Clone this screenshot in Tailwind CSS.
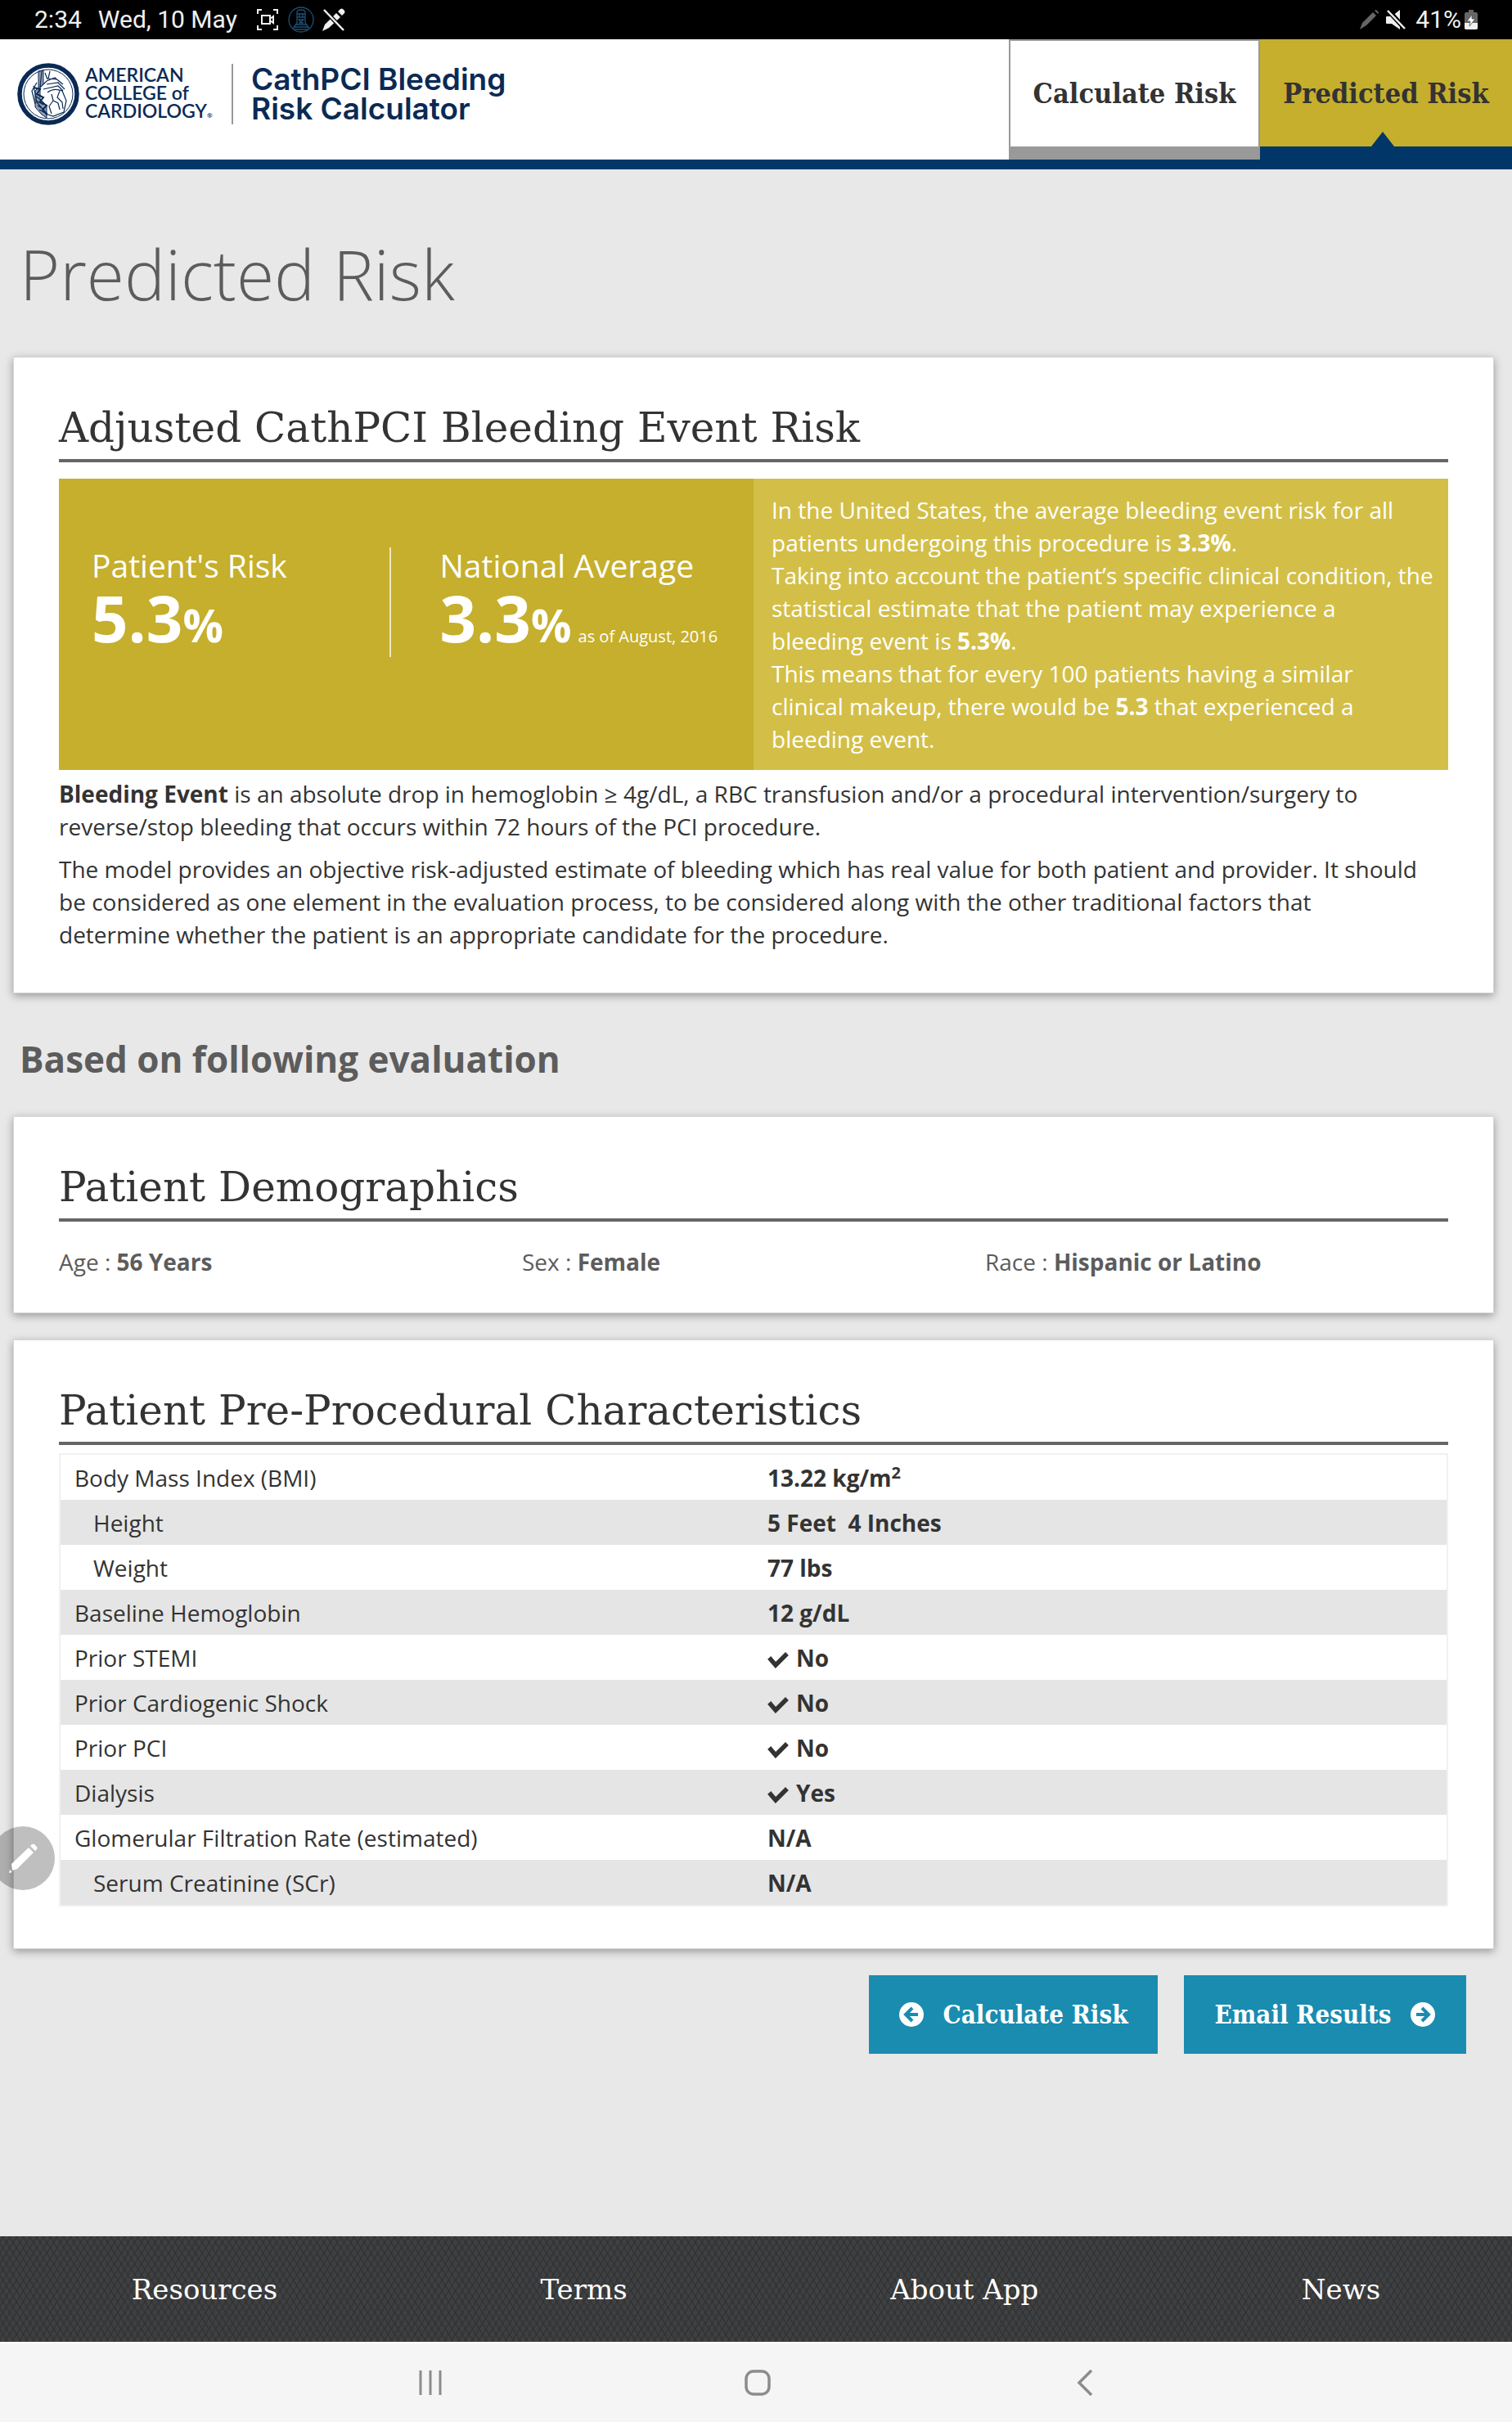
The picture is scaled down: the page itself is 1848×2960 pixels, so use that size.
<!DOCTYPE html>
<html lang="en">
<head>
<meta charset="utf-8">
<meta name="viewport" content="width=device-width, initial-scale=1">
<title>CathPCI Bleeding Risk Calculator</title>
<script src="https://cdn.jsdelivr.net/npm/@tailwindcss/browser@4"></script>
</head>
<body class="relative flex min-h-screen flex-col bg-[#e8e8e8] font-['Open_Sans',sans-serif] text-[28px] leading-10 text-[#333333]">

<!-- Device status bar -->
<div class="flex h-12 items-center justify-between bg-black pr-[42px] pl-[42px] font-['Roboto',sans-serif] text-[30px] leading-8 text-[#f0f0f0]">
  <div class="flex items-center">
    <span>2:34</span>
    <span class="ml-5">Wed, 10 May</span>
    <svg class="ml-6 h-7 w-[26px]" viewBox="0 0 26 28" fill="none" stroke="#f0f0f0" stroke-width="2"><path d="M1 7V2h5M20 2h5v5M25 21v5h-5M6 26H1v-5"/><rect x="6" y="9" width="10" height="10"/><path d="M16 13l4-3v8l-4-3"/></svg>
    <svg class="ml-3 h-8 w-8" viewBox="0 0 32 32" fill="none" stroke="#1f4f74" stroke-width="1.3"><circle cx="16" cy="16" r="15"/><path d="M11 20V7q0-3 5-3t5 3v13M11 9h10v4H11zM14 9v4M18 9v4M13 16h6l-3 3zM13 20h6M10 22h12M8 25h16M6 27l5-7M26 27l-5-7M7 28h18"/></svg>
    <svg class="ml-[10px] h-7 w-7" viewBox="0 0 28 28" fill="#f0f0f0"><path d="M0 28l3-8L17 6l5 5L8 24zM19 4l3-3q2-1 3 0l2 2q1 2 0 3l-3 3z"/><path d="M2 2l24 25" stroke="#000" stroke-width="5"/><path d="M2 2l24 25" stroke="#f0f0f0" stroke-width="2.5"/></svg>
  </div>
  <div class="flex items-center">
    <svg class="h-6 w-6" viewBox="0 0 24 24" fill="#666"><path d="M0 24l3-8L16 3l4 4L8 19zM18 1l2-1 3 3-1 2z"/></svg>
    <svg class="ml-2 h-6 w-6" viewBox="0 0 24 24" fill="#f0f0f0"><path d="M1 8h6l10-8v24L7 17H1q-1 0-1-1V9q0-1 1-1z"/><path d="M2 0l21 23" stroke="#000" stroke-width="6"/><path d="M2 1l21 22" stroke="#f0f0f0" stroke-width="2.5"/></svg>
    <span class="ml-3">41%</span>
    <svg class="ml-1 h-6 w-4" viewBox="0 0 16 24"><path d="M5 0h6v3h3q2 0 2 2v17q0 2-2 2H2q-2 0-2-2V5q0-2 2-2h3z" fill="#666"/><path d="M0 16h16v6q0 2-2 2H2q-2 0-2-2z" fill="#f0f0f0"/><path d="M9 6l-6 8h4l-1 6 7-9H9z" fill="#fff" stroke="#555" stroke-width=".8"/></svg>
  </div>
</div>

<!-- App header -->
<header class="flex h-[159px] items-start justify-between border-b-[12px] border-[#003768] bg-white">
  <a href="#" class="ml-[21px] flex items-center pt-[29px] text-[#0a2a55]">
    <svg class="h-[76px] w-[76px]" viewBox="0 0 76 76" fill="none" stroke="#0a2a55">
      <circle cx="38" cy="38" r="35" stroke-width="5.5"/><circle cx="38" cy="38" r="30" stroke-width="1"/>
      <path d="M26 10v20l-4 4v20l8 9 6 4V52l-8-8V30l4-4V9z" fill="#0a2a55" fill-opacity=".45"/>
      <path d="M30 10l-2 20 8-8 10-4 10 8M34 12l3 8M40 10l-2 9 10 1M20 28l4 20 12 14M24 24l-6 10 4 16M36 26l14-2 8 8M32 32l18-4 6 6M37 36q8-6 18-2l5 12-3 14-13 5-10-3M42 38l2 8-5 7 3 9M44 46l6 3 2 8M52 34l-3 8 6 6 1 8M22 40l8 6M23 46l9 5M25 52l8 5M27 57l7 4" stroke-width="1.2"/>
      <path d="M20 30l8 2-4 6 8 4-4 5 8 5-5 5 6 6" stroke-width="2"/>
    </svg>
    <span class="ml-[7px] w-[179px] pt-[2px] font-['Lato',sans-serif] text-[23px] font-semibold leading-[22px]">AMERICAN<br>COLLEGE of<br>CARDIOLOGY<span class="text-[8px]">®</span></span>
    <span class="h-[74px] border-l-2 border-[#999999]"></span>
    <span class="ml-[22px] font-['Inter',sans-serif] text-[37px] font-semibold leading-9">CathPCI Bleeding<br>Risk Calculator</span>
  </a>
  <nav class="flex text-center font-['Roboto_Slab','DejaVu_Serif_Condensed','DejaVu_Serif',serif] text-[34px] font-bold leading-[52px]">
    <a href="#" class="h-[147px] w-[307px] border-2 border-b-16 border-[#999999] pt-[38px]">Calculate Risk</a>
    <a href="#" class="relative h-[147px] w-[308px] border-b-16 border-[#003768] bg-[#c5af2c] pt-10">Predicted Risk
      <svg class="absolute bottom-0 left-[136px] h-[18px] w-7" viewBox="0 0 28 18" fill="#003768"><path d="M14 0l14 18H0z"/></svg>
    </a>
  </nav>
</header>

<main class="flex-1 px-4">
  <h1 class="mt-[68px] ml-2 text-[84px] font-light leading-[120px] text-[#5c5c5c]">Predicted Risk</h1>

  <section class="mt-[41px] mr-[6px] border border-[#d6d6d6] bg-white px-[55px] pt-[54px] pb-[51px] shadow-[0_3px_10px_rgba(0,0,0,0.35)]">
    <h2 class="border-b-4 border-[#666666] pb-[6px] font-['Roboto_Slab','DejaVu_Serif',serif] text-[50px] leading-[64px]">Adjusted CathPCI Bleeding Event Risk</h2>
    <div class="mt-5 grid grid-cols-2 text-white">
      <div class="grid grid-cols-2 items-start bg-[#c5af2c] pt-[84px]">
        <div class="h-[134px] pl-10">
          <p class="text-[39px] leading-[44px]">Patient's Risk</p>
          <p class="text-[78px] font-bold leading-[84px]">5.3<span class="text-[55px]">%</span></p>
        </div>
        <div class="-ml-[21px] h-[134px] border-l-2 border-white/70 pl-[60px] whitespace-nowrap">
          <p class="text-[39px] leading-[44px]">National Average</p>
          <p class="text-[78px] font-bold leading-[84px]">3.3<span class="text-[55px]">%</span><span class="ml-2 text-[20px] font-normal">as of August, 2016</span></p>
        </div>
      </div>
      <div class="bg-[#d3bf48] py-[18px] pr-3 pl-[22px]">
        <p>In the United States, the average bleeding event risk for all patients undergoing this procedure is <b>3.3%</b>.</p>
        <p>Taking into account the patient’s specific clinical condition, the statistical estimate that the patient may experience a<br>bleeding event is <b>5.3%</b>.</p>
        <p>This means that for every 100 patients having a similar<br>clinical makeup, there would be <b>5.3</b> that experienced a<br>bleeding event.</p>
      </div>
    </div>
    <p class="mt-[9px]"><b>Bleeding Event</b> is an absolute drop in hemoglobin ≥ 4g/dL, a RBC transfusion and/or a procedural intervention/surgery to<br>reverse/stop bleeding that occurs within 72 hours of the PCI procedure.</p>
    <p class="mt-3">The model provides an objective risk-adjusted estimate of bleeding which has real value for both patient and provider. It should<br>be considered as one element in the evaluation process, to be considered along with the other traditional factors that<br>determine whether the patient is an appropriate candidate for the procedure.</p>
  </section>

  <h2 class="mt-[50px] ml-2 text-[44px] font-bold leading-[60px] text-[#5c5c5c]">Based on following evaluation</h2>

  <section class="mt-10 mr-[6px] border border-[#d6d6d6] bg-white px-[55px] pt-[54px] pb-[42px] shadow-[0_3px_10px_rgba(0,0,0,0.35)]">
    <h2 class="border-b-4 border-[#666666] pb-[6px] font-['Roboto_Slab','DejaVu_Serif',serif] text-[50px] leading-[64px]">Patient Demographics</h2>
    <div class="mt-[29px] grid grid-cols-3 text-[#5c5c5c]">
      <p>Age : <b>56 Years</b></p>
      <p>Sex : <b>Female</b></p>
      <p>Race : <b>Hispanic or Latino</b></p>
    </div>
  </section>

  <section class="mt-8 mr-[6px] border border-[#d6d6d6] bg-white px-[55px] pt-[54px] pb-[51px] shadow-[0_3px_10px_rgba(0,0,0,0.35)]">
    <h2 class="border-b-4 border-[#666666] pb-[6px] font-['Roboto_Slab','DejaVu_Serif',serif] text-[50px] leading-[64px]">Patient Pre-Procedural Characteristics</h2>
    <svg class="hidden"><symbol id="check" viewBox="0 0 26 20"><path d="M4 8l6 7L22 3" fill="none" stroke="#333333" stroke-width="5.5" stroke-linecap="square" transform="translate(0 1)"/></symbol></svg>
    <table class="mt-[10px] w-full table-fixed border-separate border-spacing-0 border-2 border-[#f1f1f1] text-left">
      <tbody>
        <tr class="h-[55px]"><th class="pl-[17px] font-normal">Body Mass Index (BMI)</th><td class="pl-[17px] font-bold">13.22 kg/m<sup class="text-[20px]">2</sup></td></tr>
        <tr class="h-[55px] bg-[#e5e5e5]"><th class="pl-10 font-normal">Height</th><td class="pl-[17px] font-bold">5 Feet&nbsp; 4 Inches</td></tr>
        <tr class="h-[55px]"><th class="pl-10 font-normal">Weight</th><td class="pl-[17px] font-bold">77 lbs</td></tr>
        <tr class="h-[55px] bg-[#e5e5e5]"><th class="pl-[17px] font-normal">Baseline Hemoglobin</th><td class="pl-[17px] font-bold">12 g/dL</td></tr>
        <tr class="h-[55px]"><th class="pl-[17px] font-normal">Prior STEMI</th><td class="pl-[17px] font-bold"><svg class="mr-[9px] inline h-5 w-[26px]"><use href="#check"/></svg>No</td></tr>
        <tr class="h-[55px] bg-[#e5e5e5]"><th class="pl-[17px] font-normal">Prior Cardiogenic Shock</th><td class="pl-[17px] font-bold"><svg class="mr-[9px] inline h-5 w-[26px]"><use href="#check"/></svg>No</td></tr>
        <tr class="h-[55px]"><th class="pl-[17px] font-normal">Prior PCI</th><td class="pl-[17px] font-bold"><svg class="mr-[9px] inline h-5 w-[26px]"><use href="#check"/></svg>No</td></tr>
        <tr class="h-[55px] bg-[#e5e5e5]"><th class="pl-[17px] font-normal">Dialysis</th><td class="pl-[17px] font-bold"><svg class="mr-[9px] inline h-5 w-[26px]"><use href="#check"/></svg>Yes</td></tr>
        <tr class="h-[55px]"><th class="pl-[17px] font-normal">Glomerular Filtration Rate (estimated)</th><td class="pl-[17px] font-bold">N/A</td></tr>
        <tr class="h-[55px] bg-[#e5e5e5]"><th class="pl-10 font-normal">Serum Creatinine (SCr)</th><td class="pl-[17px] font-bold">N/A</td></tr>
      </tbody>
    </table>
  </section>

  <div class="mt-8 mr-10 mb-12 flex justify-end gap-8 font-['Roboto_Slab','DejaVu_Serif_Condensed','DejaVu_Serif',serif] text-[31px] font-bold text-white">
    <button class="flex h-24 w-[353px] items-center justify-center gap-6 bg-[#198cb0]">
      <svg class="h-[30px] w-[30px] shrink-0" viewBox="0 0 30 30"><circle cx="15" cy="15" r="15" fill="#fff"/><path d="M16 7l-8 8 8 8M8 15h15" fill="none" stroke="#198cb0" stroke-width="4"/></svg>
      Calculate Risk
    </button>
    <button class="flex h-24 w-[345px] items-center justify-center gap-6 bg-[#198cb0]">
      Email Results
      <svg class="h-[30px] w-[30px] shrink-0" viewBox="0 0 30 30"><circle cx="15" cy="15" r="15" fill="#fff"/><path d="M14 7l8 8-8 8M22 15H7" fill="none" stroke="#198cb0" stroke-width="4"/></svg>
    </button>
  </div>
</main>

<footer class="border-b-2 border-white bg-[#3f4041] bg-[repeating-linear-gradient(58deg,#2f303199_0px,#2f303199_2px,transparent_2px,transparent_7px),repeating-linear-gradient(-58deg,#2f303199_0px,#2f303199_2px,transparent_2px,transparent_7px)]">
  <nav class="flex h-[129px] items-center justify-around font-['Roboto_Slab','DejaVu_Serif',serif] text-[34px] text-white">
    <a href="#">Resources</a>
    <a href="#">Terms</a>
    <a href="#">About App</a>
    <a href="#">News</a>
  </nav>
</footer>

<!-- Device navigation bar -->
<div class="bg-[#f5f5f5] pl-1">
  <div class="mx-auto grid h-24 w-[65%] grid-cols-3 items-center justify-items-center">
    <button aria-label="Recent apps"><svg class="h-8 w-8" viewBox="0 0 32 32" stroke="#8c8c8c" stroke-width="3"><path d="M4 1v30M16 1v30M28 1v30"/></svg></button>
    <button aria-label="Home"><svg class="h-8 w-8" viewBox="0 0 32 32" fill="none" stroke="#8c8c8c" stroke-width="3.5"><rect x="2" y="2" width="28" height="28" rx="9"/></svg></button>
    <button aria-label="Back"><svg class="h-8 w-8" viewBox="0 0 32 32" fill="none" stroke="#8c8c8c" stroke-width="3.5"><path d="M24 1L9 16l15 15"/></svg></button>
  </div>
</div>

<!-- Floating pen shortcut, tucked against the left edge -->
<button aria-label="Pen" class="absolute top-[2232px] -left-[11px] flex size-[78px] items-center justify-center rounded-full bg-black/25">
  <svg class="h-9 w-9" viewBox="0 0 36 36" fill="#fff"><path d="M4 25L25 5l6 6L11 31l-6 2zM27 3l2-2q2-1 3 0l3 3q1 2 0 3l-2 2zM1 36l1-4 3 3z"/></svg>
</button>
</body>
</html>
